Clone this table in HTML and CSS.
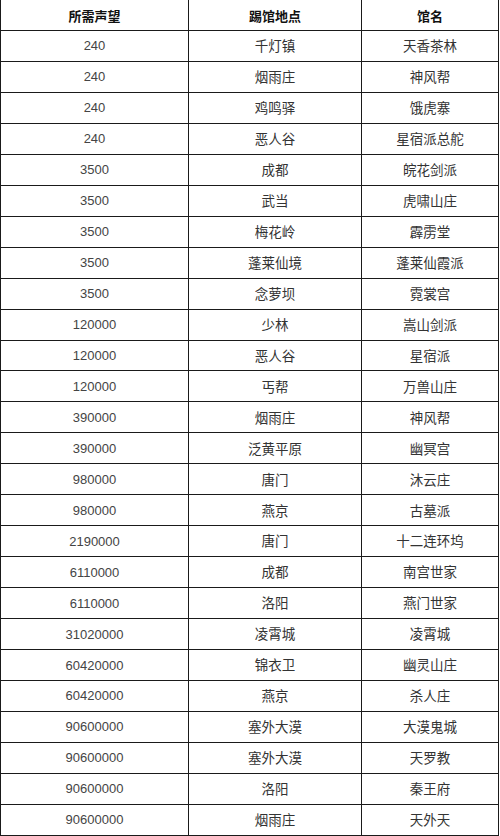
FILE: index.html
```html
<!DOCTYPE html>
<html lang="zh-CN">
<head>
<meta charset="utf-8">
<title>踢馆</title>
<link rel="stylesheet" href="styles.css">
</head>
<body>
<div class="table">
  <div class="cell head">所需声望</div><div class="cell head">踢馆地点</div><div class="cell head">馆名</div>
  <div class="cell num">240</div><div class="cell">千灯镇</div><div class="cell">天香茶林</div>
  <div class="cell num">240</div><div class="cell">烟雨庄</div><div class="cell">神风帮</div>
  <div class="cell num">240</div><div class="cell">鸡鸣驿</div><div class="cell">饿虎寨</div>
  <div class="cell num">240</div><div class="cell">恶人谷</div><div class="cell">星宿派总舵</div>
  <div class="cell num">3500</div><div class="cell">成都</div><div class="cell">皖花剑派</div>
  <div class="cell num">3500</div><div class="cell">武当</div><div class="cell">虎啸山庄</div>
  <div class="cell num">3500</div><div class="cell">梅花岭</div><div class="cell">霹雳堂</div>
  <div class="cell num">3500</div><div class="cell">蓬莱仙境</div><div class="cell">蓬莱仙霞派</div>
  <div class="cell num">3500</div><div class="cell">念萝坝</div><div class="cell">霓裳宫</div>
  <div class="cell num">120000</div><div class="cell">少林</div><div class="cell">嵩山剑派</div>
  <div class="cell num">120000</div><div class="cell">恶人谷</div><div class="cell">星宿派</div>
  <div class="cell num">120000</div><div class="cell">丐帮</div><div class="cell">万兽山庄</div>
  <div class="cell num">390000</div><div class="cell">烟雨庄</div><div class="cell">神风帮</div>
  <div class="cell num">390000</div><div class="cell">泛黄平原</div><div class="cell">幽冥宫</div>
  <div class="cell num">980000</div><div class="cell">唐门</div><div class="cell">沐云庄</div>
  <div class="cell num">980000</div><div class="cell">燕京</div><div class="cell">古墓派</div>
  <div class="cell num">2190000</div><div class="cell">唐门</div><div class="cell">十二连环坞</div>
  <div class="cell num">6110000</div><div class="cell">成都</div><div class="cell">南宫世家</div>
  <div class="cell num">6110000</div><div class="cell">洛阳</div><div class="cell">燕门世家</div>
  <div class="cell num">31020000</div><div class="cell">凌霄城</div><div class="cell">凌霄城</div>
  <div class="cell num">60420000</div><div class="cell">锦衣卫</div><div class="cell">幽灵山庄</div>
  <div class="cell num">60420000</div><div class="cell">燕京</div><div class="cell">杀人庄</div>
  <div class="cell num">90600000</div><div class="cell">塞外大漠</div><div class="cell">大漠鬼城</div>
  <div class="cell num">90600000</div><div class="cell">塞外大漠</div><div class="cell">天罗教</div>
  <div class="cell num">90600000</div><div class="cell">洛阳</div><div class="cell">秦王府</div>
  <div class="cell num">90600000</div><div class="cell">烟雨庄</div><div class="cell">天外天</div>
</div>
</body>
</html>
```
FILE: styles.css
```css
html, body {
  margin: 0;
  padding: 0;
  background: #fff;
}

.table {
  display: grid;
  grid-template-columns: 188px 173px 137px;
  grid-template-rows: 31px;
  grid-auto-rows: 30.96px;
  width: 498px;
  border-left: 1px solid #1a1a1a;
  font-family: "Noto Sans CJK SC", "Liberation Sans", sans-serif;
  font-size: 13.5px;
  color: #333;
}

.cell {
  box-sizing: border-box;
  display: flex;
  align-items: center;
  justify-content: center;
  border-right: 1px solid #1a1a1a;
  border-bottom: 1px solid #1a1a1a;
  line-height: 1;
  white-space: nowrap;
}

.head {
  font-weight: bold;
  font-size: 13px;
  color: #111;
}

.num {
  font-family: "Liberation Sans", Arial, sans-serif;
  font-size: 13px;
  color: #444;
}
```
